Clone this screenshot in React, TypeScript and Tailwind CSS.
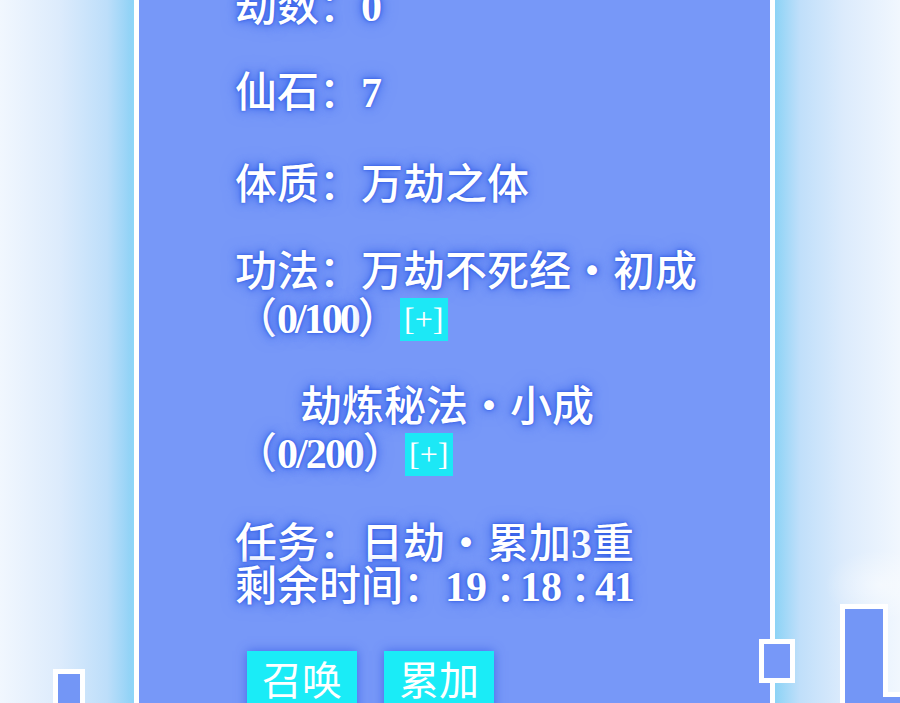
import React from 'react';

const glow = '[text-shadow:0_0_3px_#2853e2,0_0_8px_#3763ea,0_0_16px_#5279f0]';

const PlusBox: React.FC = () => (
  <span className="inline-block align-top w-[48px] h-[43px] mt-[2px] bg-[#1ce8f6] text-white text-[32px] font-normal leading-[43px] text-center [text-shadow:none]">
    [+]
  </span>
);

const N: React.FC<{ children: React.ReactNode; className?: string }> = ({ children, className = '' }) => (
  <span className={`font-bold ${className}`}>{children}</span>
);

const Mid = () => <span>・</span>;

// narrow colon used between the clock digits
const Colon = () => <span className="pl-[8px] tracking-[-17px]">：</span>;

export default function App() {
  return (
    <div
      className="relative w-[900px] h-[703px] overflow-hidden flex"
      style={{ fontFamily: '"Liberation Serif", "Noto Sans CJK SC", serif' }}
    >
      {/* left gutter */}
      <div className="w-[134px] h-full bg-[linear-gradient(to_right,#f1f7fe_0%,#dcebfc_45%,#bddefa_80%,#8cd1f6_100%)]" />

      {/* main panel */}
      <div className="w-[641px] h-full bg-[#7798f8] border-x-[5px] border-white shadow-[0_0_6px_#8fdcf8]">
        <div className={`pl-[96px] text-white text-[42px] font-medium leading-[46px] ${glow}`}>
          <p className="mt-[-16px]">劫数：<N>0</N></p>
          <p className="mt-[40px]">仙石：<N>7</N></p>
          <p className="mt-[46px]">体质：万劫之体</p>
          <div className="mt-[41px] leading-[47px]">
            <p>功法：万劫不死经<Mid />初成</p>
            <p>（<N className="tracking-[-3px]">0/100</N>）<PlusBox /></p>
          </div>
          <div className="mt-[41px] leading-[47px]">
            <p className="pl-[65px]">劫炼秘法<Mid />小成</p>
            <p>（<N className="tracking-[-2px]">0/200</N>）<PlusBox /></p>
          </div>
          <div className="mt-[45px] leading-[43px]">
            <p>任务：日劫<Mid />累加<N>3</N>重</p>
            <p>
              剩余时间：<N>19</N><Colon /><N>18</N><Colon /><N className="tracking-[-2px]">41</N>
            </p>
          </div>
          <div className="mt-[42px] ml-[12px] flex gap-[27px]">
            <button className="w-[110px] h-[62px] bg-[#1aecf7] text-white text-[40px] font-normal leading-[56px] text-center [text-shadow:none] shadow-[0_0_10px_rgba(45,85,230,0.7)]">
              召唤
            </button>
            <button className="w-[110px] h-[62px] bg-[#1aecf7] text-white text-[40px] font-normal leading-[56px] text-center [text-shadow:none] shadow-[0_0_10px_rgba(45,85,230,0.7)]">
              累加
            </button>
          </div>
        </div>
      </div>

      {/* right gutter */}
      <div className="flex-1 h-full bg-[linear-gradient(to_left,#f1f7fe_0%,#dcebfc_45%,#c0dffa_80%,#8cd3f6_100%)]" />

      {/* skyline decoration */}
      <svg className="absolute left-0 top-0 pointer-events-none" width="900" height="703" viewBox="0 0 900 703">
        <defs>
          <radialGradient id="hl" cx="0.5" cy="0.5" r="0.5">
            <stop offset="0" stopColor="#ffffff" stopOpacity="0.5" />
            <stop offset="1" stopColor="#ffffff" stopOpacity="0" />
          </radialGradient>
        </defs>
        <ellipse cx="880" cy="585" rx="55" ry="35" fill="url(#hl)" />
        <rect x="55.5" y="671.5" width="27" height="45" fill="#7396f6" stroke="#ffffff" strokeWidth="5" />
        <rect x="761.5" y="641.5" width="31" height="39" fill="#7798f8" stroke="#ffffff" strokeWidth="5" />
        <path d="M842.5 715 L842.5 606.5 L885.5 606.5 L885.5 694.5 L910 694.5 L910 715 Z" fill="#7396f6" stroke="#ffffff" strokeWidth="5" />
      </svg>
    </div>
  );
}
